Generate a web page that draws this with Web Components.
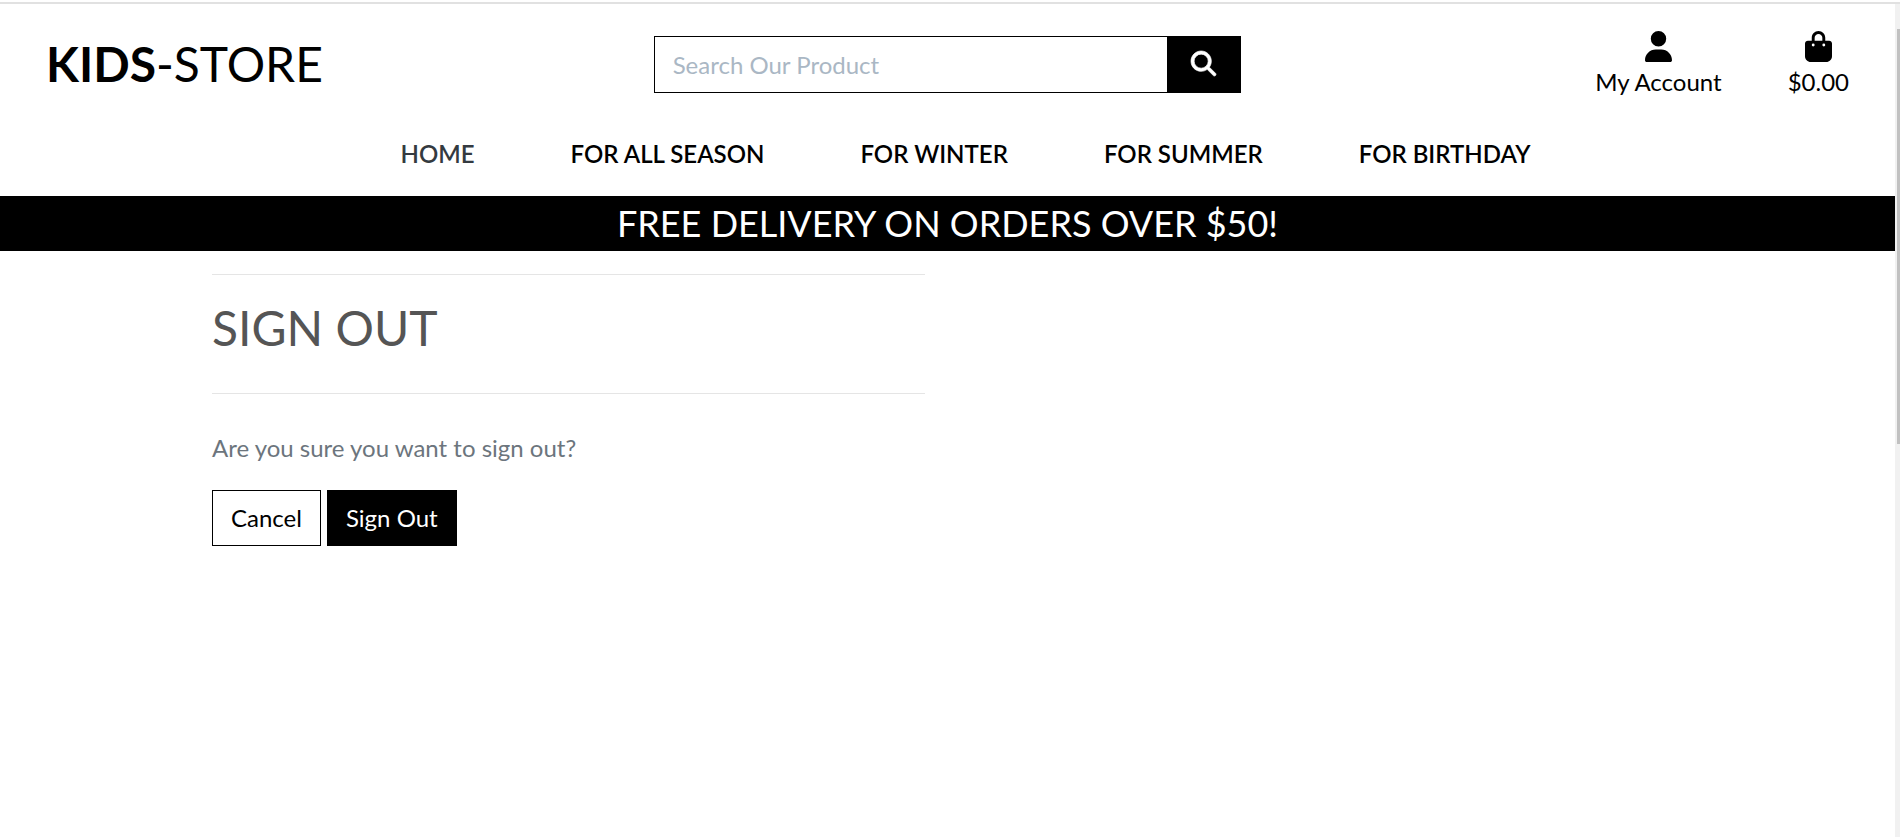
<!DOCTYPE html>
<html lang="en">
<head>
<meta charset="utf-8">
<title>Kids-Store | Sign Out</title>
<style>
  body { margin: 0; background: #fff; font-family: Lato, sans-serif; font-size: 24px; line-height: 36px; color: #000; }
</style>
</head>
<body>
<store-page>
  <store-header slot="header">
    <store-logo></store-logo>
    <store-search></store-search>
    <store-links>
      <store-icon-link icon="user">My Account</store-icon-link>
      <store-icon-link icon="bag">$0.00</store-icon-link>
    </store-links>
  </store-header>
  <store-nav slot="header">
    <store-nav-item current>HOME</store-nav-item>
    <store-nav-item>FOR ALL SEASON</store-nav-item>
    <store-nav-item>FOR WINTER</store-nav-item>
    <store-nav-item>FOR SUMMER</store-nav-item>
    <store-nav-item>FOR BIRTHDAY</store-nav-item>
  </store-nav>
  <store-banner slot="header">FREE DELIVERY ON ORDERS OVER $50!</store-banner>
  <sign-out-panel></sign-out-panel>
</store-page>

<script>
class StoreElement extends HTMLElement {
  constructor() {
    super();
    this.attachShadow({ mode: 'open' }).innerHTML =
      '<style>*{box-sizing:border-box}a{color:inherit;text-decoration:none}</style>' + this.view();
  }
}

customElements.define('store-page', class extends StoreElement {
  view() { return `
    <style>
      :host { display: grid; grid-template-columns: 1fr 5px; grid-template-rows: auto 1fr; min-height: 100vh; }
      .rule { grid-column: 1 / -1; height: 2px; margin-top: 2px; background: #e1e1e1; }
      .track { background: #f1f1f1; padding: 25px 0 0 2px; }
      .thumb { height: calc(50% + 11px); background: #c1c1c1; }
      .page { min-width: 0; }
    </style>
    <div class="rule"></div>
    <div class="page"><header><slot name="header"></slot></header><main><slot></slot></main></div>
    <div class="track"><div class="thumb"></div></div>`; }
});

customElements.define('store-header', class extends StoreElement {
  view() { return `
    <style>
      :host { display: grid; grid-template-columns: repeat(3, minmax(0, 1fr)); padding: 24px 0; }
    </style><slot></slot>`; }
});

customElements.define('store-logo', class extends StoreElement {
  view() { return `
    <style>
      :host { display: block; padding: 6px 0 0 46px; }
      h2 { margin: 0; font-size: 48px; line-height: 60px; font-weight: 400; }
      strong { font-weight: 700; }
    </style><h2><a href="#"><strong>KIDS</strong>-STORE</a></h2>`; }
});

customElements.define('store-search', class extends StoreElement {
  view() { return `
    <style>
      :host { display: block; padding: 8px 22px 0; }
      form { display: flex; height: 57px; border: 1px solid #000; }
      input { flex: 1; min-width: 0; margin: 0; border: 0; padding: 0 18px; background: #fff; font: inherit; outline: 0; border-radius: 0; }
      input::placeholder { color: #aab7c4; opacity: 1; }
      button { width: 73px; border: 0; padding: 0; background: #000; display: grid; place-items: center; }
      svg { display: block; width: 25px; height: 25px; fill: #fff; stroke: #fff; stroke-width: 14; overflow: visible; margin-bottom: 2px; }
    </style>
    <form><input type="text" aria-label="Search Our Product" placeholder="Search Our Product">
    <button type="button" aria-label="Search"><svg viewBox="0 0 512 512"><path d="M416 208c0 45.900-14.900 88.300-40 122.700L502.600 457.400c12.500 12.500 12.500 32.800 0 45.300s-32.800 12.500-45.300 0L330.700 376c-34.400 25.200-76.800 40-122.700 40C93.100 416 0 322.900 0 208S93.100 0 208 0S416 93.100 416 208zM208 352a144 144 0 1 0 0-288 144 144 0 1 0 0 288z"/></svg></button></form>`; }
});

customElements.define('store-links', class extends StoreElement {
  view() { return `
    <style>:host { display: flex; justify-content: flex-end; gap: 66px; padding: 3px 46px 0 0; }</style><slot></slot>`; }
});

const ICONS = {
  user: '<svg viewBox="0 0 448 512"><path d="M224 256A128 128 0 1 0 224 0a128 128 0 1 0 0 256zm-45.700 48C79.800 304 0 383.800 0 482.300C0 498.700 13.300 512 29.700 512H418.300c16.400 0 29.700-13.300 29.700-29.700C448 383.800 368.200 304 269.700 304H178.300z"/></svg>',
  bag: '<svg viewBox="0 0 448 512"><path d="M160 112c0-35.300 28.700-64 64-64s64 28.700 64 64v48H160V112zm-48 48H48c-26.500 0-48 21.500-48 48V416c0 53 43 96 96 96H352c53 0 96-43 96-96V208c0-26.500-21.500-48-48-48H336V112C336 50.100 285.900 0 224 0S112 50.100 112 112v48zm24 48a24 24 0 1 1 0 48 24 24 0 1 1 0-48zm152 24a24 24 0 1 1 48 0 24 24 0 1 1-48 0z"/></svg>'
};

customElements.define('store-icon-link', class extends StoreElement {
  view() { return `
    <style>
      :host { display: block; }
      a { display: flex; flex-direction: column; align-items: center; }
      svg { display: block; width: 27px; height: 31px; margin-bottom: 2px; }
    </style><a href="#">${ICONS[this.getAttribute('icon')]}<slot></slot></a>`; }
});

customElements.define('store-nav', class extends StoreElement {
  view() { return `
    <style>
      :host { display: block; }
      nav { display: flex; justify-content: center; gap: 96px; padding: 12px 0 24px 36px; }
    </style><nav><slot></slot></nav>`; }
});

customElements.define('store-nav-item', class extends StoreElement {
  view() { return `
    <style>
      :host { display: block; font-weight: 600; }
      :host([current]) { color: #343a40; }
    </style><a href="#"><slot></slot></a>`; }
});

customElements.define('store-banner', class extends StoreElement {
  view() { return `
    <style>
      :host { display: block; background: #000; color: #fff; }
      h4 { margin: 0; font-size: 36px; line-height: 55px; font-weight: 400; text-align: center; }
    </style><h4><slot></slot></h4>`; }
});

customElements.define('sign-out-panel', class extends StoreElement {
  view() { return `
    <style>
      :host { display: block; width: 1471px; max-width: 100%; margin: 0 auto; }
      section { width: 50%; padding: 23px 23px 0 0; }
      hr { margin: 0; border: 0; height: 1px; background: #e5e5e5; }
      h2 { margin: 0; padding: 20px 0 32px; font-size: 48px; line-height: 66px; font-weight: 400; color: #555; }
      p { margin: 0; padding: 36px 0 24px; color: #6c757d; }
      .actions { display: flex; gap: 6px; }
      .btn { display: block; box-sizing: border-box; height: 56px; border: 1px solid #000; border-radius: 0; padding: 0 18px; font: inherit; line-height: 54px; background: #fff; color: #000; }
      .primary { background: #000; color: #fff; }
    </style>
    <section>
      <hr><h2>SIGN OUT</h2><hr>
      <p>Are you sure you want to sign out?</p>
      <div class="actions"><a class="btn" href="#">Cancel</a><button class="btn primary" type="button">Sign Out</button></div>
    </section>`; }
});
</script>
</body>
</html>
